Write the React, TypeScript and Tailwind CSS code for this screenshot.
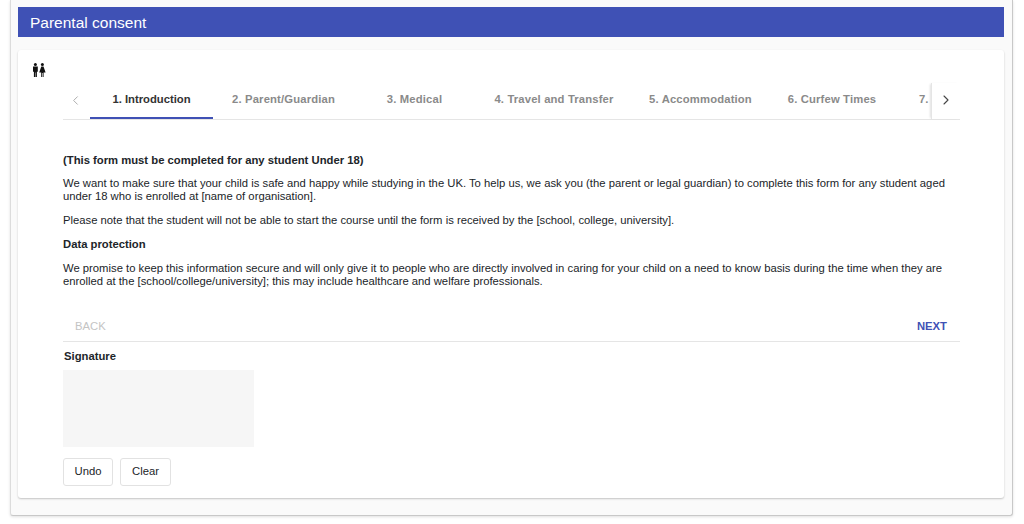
import React from 'react';
import { ChevronLeft, ChevronRight } from 'lucide-react';

const tabs = [
  { label: '1. Introduction', width: 'w-[123px]', active: true },
  { label: '2. Parent/Guardian', width: 'w-[141px]' },
  { label: '3. Medical', width: 'w-[121px]' },
  { label: '4. Travel and Transfer', width: 'w-[158px]' },
  { label: '5. Accommodation', width: 'w-[135px]' },
  { label: '6. Curfew Times', width: 'w-[128px]' },
];

const PeopleIcon = () => (
  <svg viewBox="0 0 14 14" className="w-[14px] h-[14px] text-[#111]" fill="currentColor">
    <circle cx="3.4" cy="1.6" r="1.5" />
    <path d="M1 3.6h4.8v5.2H4.9V14H3.6V9.4h-.4V14H1.9V8.8H1z" />
    <circle cx="10.4" cy="1.6" r="1.5" />
    <path d="M9.3 3.6h2.2L13.6 9.6h-2V14h-.9V10h-.6v4h-.9V9.6h-2z" />
  </svg>
);

export default function App() {
  return (
    <div className="h-[524px] overflow-hidden bg-white pl-[10px] pr-[11px] font-['Liberation_Sans',Arial,sans-serif] text-[11.28px] leading-[13px] text-[#212529]">
      <div className="h-[516px] rounded-b-[3px] border-r border-b border-l border-r-[#c8c8c8] border-b-[#c8c8c8] border-l-[#dcdcdc] bg-[#fafafa] pt-[7px] pr-[8px] pl-[7px] shadow-[0_1px_3px_rgba(0,0,0,0.12)]">
        <div className="h-[30px] bg-[#3f51b5] pl-3 text-[15.5px] leading-[31px] text-white">Parental consent</div>

        <div className="mt-[13px] h-[448px] rounded-[3px] bg-white pt-[13px] shadow-[0_1px_2px_rgba(0,0,0,0.22)]">
          <div className="pl-[14px]">
            <PeopleIcon />
          </div>

          <div className="mt-[6px] mr-[44px] ml-[45px]">
            <div className="flex h-[37px] border-b border-[#e5e5e5]">
              <button className="flex w-[27px] shrink-0 items-center justify-center pr-[2px] pb-[2px] text-[#a8a8a8]">
                <ChevronLeft size={15} strokeWidth={1.5} />
              </button>
              <div className="flex min-w-0 flex-1 overflow-hidden">
                {tabs.map((tab) => (
                  <div
                    key={tab.label}
                    className={`${tab.width} h-full shrink-0 pt-[10px] text-center font-bold whitespace-nowrap ${
                      tab.active ? 'border-b-2 border-[#3f51b5] text-[#333]' : 'tracking-[0.15px] text-[#8a8a8a]'
                    }`}
                  >
                    {tab.label}
                  </div>
                ))}
                <div className="shrink-0 pt-[10px] pl-[23px] font-bold whitespace-nowrap text-[#8a8a8a]">7.</div>
              </div>
              <button className="z-10 flex w-[29px] shrink-0 items-center justify-center border-l border-[#e5e5e5] pb-[2px] text-[#444] shadow-[-2px_0_2px_-1px_rgba(0,0,0,0.12)]">
                <ChevronRight size={16} strokeWidth={1.6} />
              </button>
            </div>

            <div className="mt-[34px]">
              <p className="font-bold">(This form must be completed for any student Under 18)</p>
              <p className="mt-[10px]">
                We want to make sure that your child is safe and happy while studying in the UK. To help us, we ask you (the parent or legal guardian) to complete this form for any student aged under 18 who is enrolled at [name of organisation].
              </p>
              <p className="mt-[11px]">
                Please note that the student will not be able to start the course until the form is received by the [school, college, university].
              </p>
              <p className="mt-[11px] font-bold">Data protection</p>
              <p className="mt-[11px]">
                We promise to keep this information secure and will only give it to people who are directly involved in caring for your child on a need to know basis during the time when they are enrolled at the [school/college/university]; this may include healthcare and welfare professionals.
              </p>
            </div>

            <div className="mt-[26px] flex h-[28px] items-center justify-between border-b border-[#e5e5e5] pr-[13px] pb-[2px] pl-[12px]">
              <span className="text-[#c4c4c4]">BACK</span>
              <span className="font-bold text-[#3f51b5]">NEXT</span>
            </div>

            <p className="mt-[8px] pl-px font-bold">Signature</p>
            <div className="mt-[7px] h-[77px] w-[191px] bg-[#f6f6f6]" />
            <div className="mt-[11px] flex gap-[7px]">
              <button className="h-[28px] w-[50px] rounded-[3px] border border-[#e2e2e2] bg-white pb-[2px]">Undo</button>
              <button className="h-[28px] w-[51px] rounded-[3px] border border-[#e2e2e2] bg-white pb-[2px]">Clear</button>
            </div>
          </div>
        </div>
      </div>
    </div>
  );
}
